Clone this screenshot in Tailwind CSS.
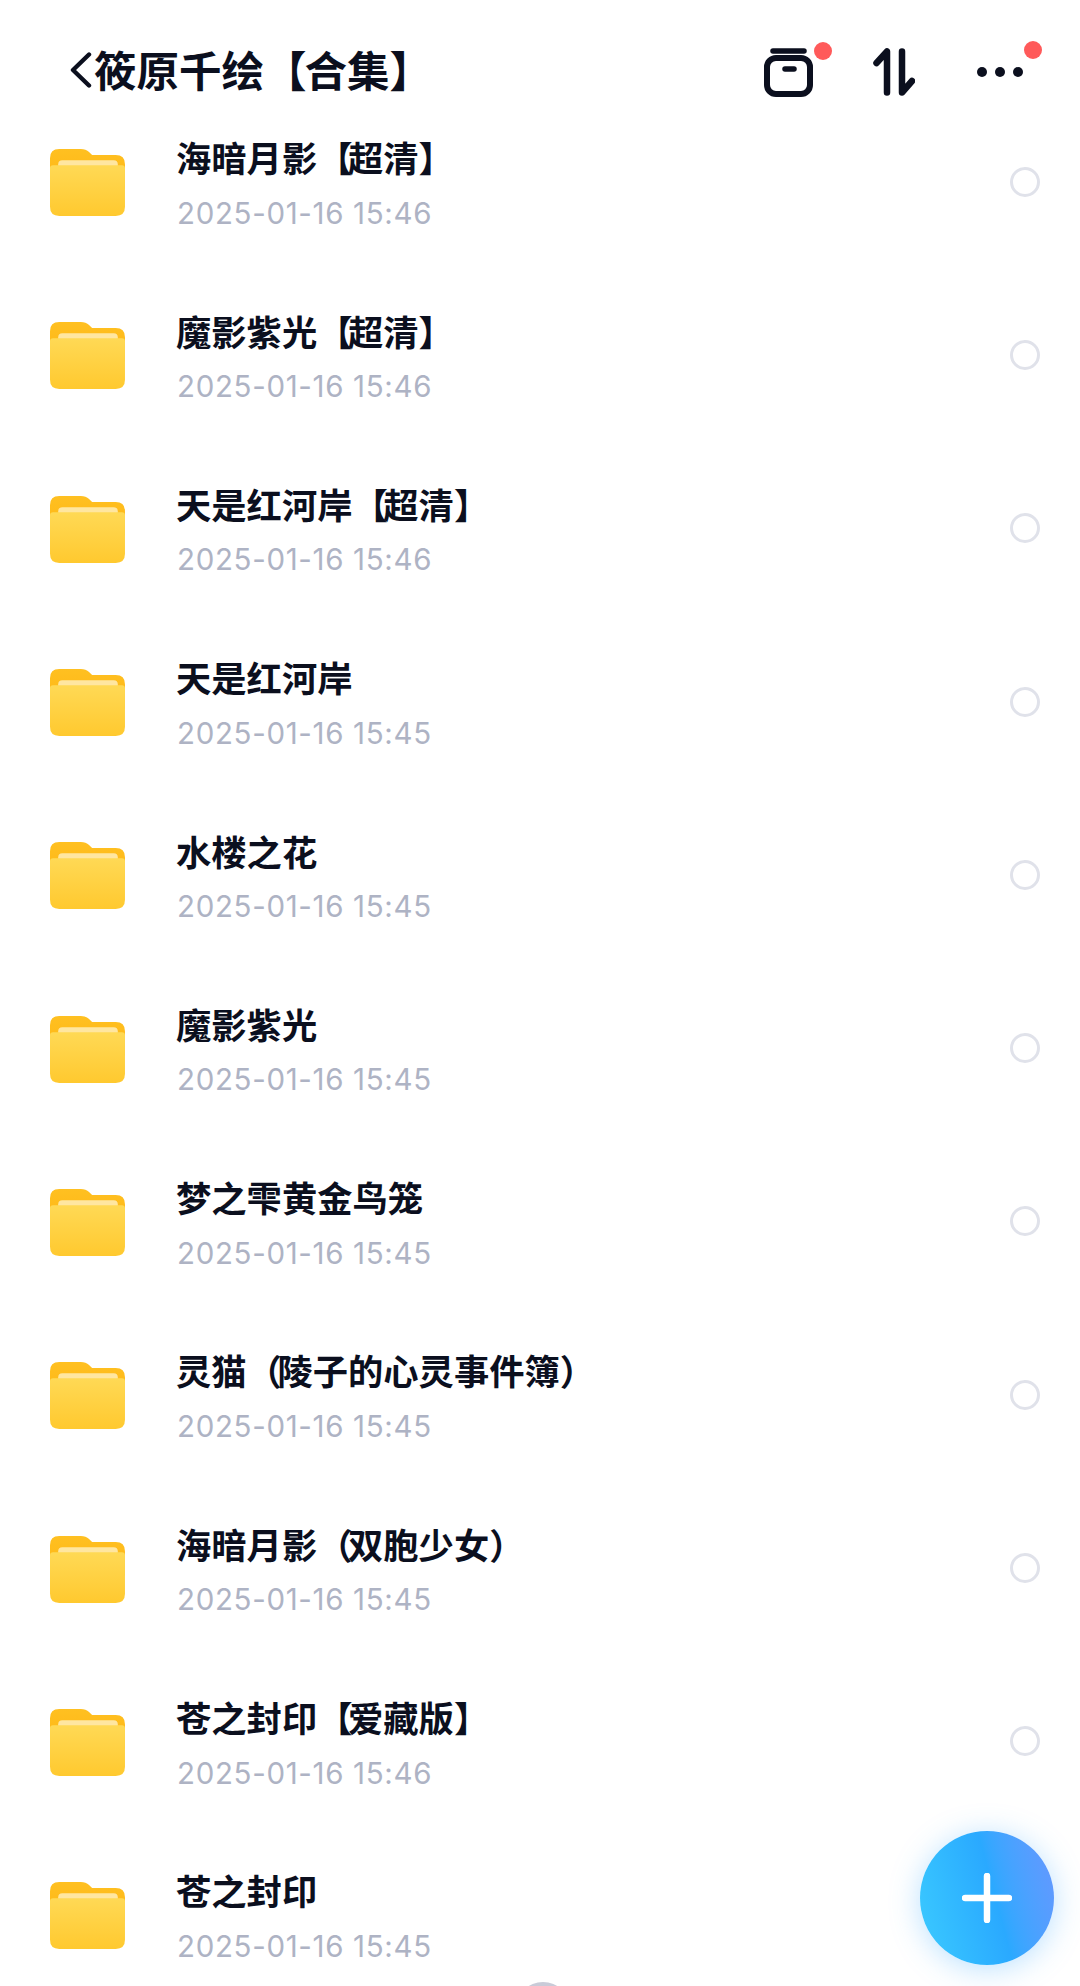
<!DOCTYPE html>
<html lang="zh-CN">
<head>
  <meta charset="UTF-8" />
  <meta name="viewport" content="width=device-width, initial-scale=1.0" />
  <title>筱原千绘【合集】</title>
  <script src="https://cdn.jsdelivr.net/npm/@tailwindcss/browser@4"></script>
</head>
<body class="bg-white">
  <div class="relative w-[1080px] h-[1986px] overflow-hidden bg-white font-['Inter','Noto_Sans_CJK_SC',sans-serif]">

    <!-- header -->
    <header class="flex items-center h-[95px] pt-[49px] pl-[69.5px] text-[#0b0f1e]">
      <svg class="w-[22px] h-[40px] shrink-0" viewBox="0 0 22 40" fill="none" stroke="currentColor" stroke-width="4.4" stroke-linecap="round" stroke-linejoin="round">
        <path d="M19 2.5 L3 18 L19 33.5" />
      </svg>
      <h1 class="ml-[2.5px] text-[42.5px] leading-none font-semibold">筱原千绘<span class="tracking-[-2px]">【</span>合集】</h1>

      <div class="relative ml-auto w-[49px] h-[49px] mr-[60px] shrink-0">
        <svg class="w-[49px] h-[49px]" viewBox="0 0 49 49" fill="none" stroke="currentColor" stroke-linecap="round">
          <path d="M9 3 H40" stroke-width="5.5" />
          <rect x="3" y="10" width="43" height="36" rx="9" stroke-width="6" />
          <path d="M21 21 H30" stroke-width="5.5" />
        </svg>
        <span class="absolute left-[50px] top-[-6px] w-[18px] h-[18px] rounded-full bg-[#ff5a5a]"></span>
      </div>

      <svg class="w-[42px] h-[48px] mr-[62px] shrink-0" viewBox="0 0 42 48" fill="none" stroke="currentColor" stroke-width="6.5" stroke-linecap="round" stroke-linejoin="round">
        <path d="M3.5 15 L14 3.5 V44.5" />
        <path d="M29 3.5 V44.5 L39 33" />
      </svg>

      <div class="relative flex items-center gap-[8.5px] mr-[57px] w-[46px] shrink-0">
        <span class="w-[9.5px] h-[9.5px] rounded-full bg-[#0b0f1e] shrink-0"></span>
        <span class="w-[9.5px] h-[9.5px] rounded-full bg-[#0b0f1e] shrink-0"></span>
        <span class="w-[9.5px] h-[9.5px] rounded-full bg-[#0b0f1e] shrink-0"></span>
        <span class="absolute left-[47px] top-[-26px] w-[18px] h-[18px] rounded-full bg-[#ff5a5a]"></span>
      </div>
    </header>

    <!-- file list -->
    <ul id="list"></ul>

    <!-- floating add button -->
    <button class="absolute left-[920px] top-[1831px] w-[134px] h-[134px] rounded-full flex items-center justify-center bg-linear-75 from-[#3ccbff] via-[#2aa9ff] via-55% to-[#6696ff] shadow-[0_4px_30px_rgba(60,170,255,0.35)]">
      <svg class="w-[50px] h-[50px]" viewBox="0 0 50 50" fill="none" stroke="white" stroke-width="6.5" stroke-linecap="round">
        <path d="M25 3 V47 M3 25 H47" />
      </svg>
    </button>

    <!-- bottom edge of the handle -->
    <div class="absolute left-[516px] top-[1982px] w-[54px] h-[54px] rounded-full bg-[#c9cbd8]"></div>
  </div>

  <script>
    const tight = '<span class="tracking-[-4.5px]">';
    const items = [
      [`海暗月影${tight}【</span>超清】`, '2025-01-16 15:46'],
      [`魔影紫光${tight}【</span>超清】`, '2025-01-16 15:46'],
      [`天是红河岸${tight}【</span>超清】`, '2025-01-16 15:46'],
      ['天是红河岸', '2025-01-16 15:45'],
      ['水楼之花', '2025-01-16 15:45'],
      ['魔影紫光', '2025-01-16 15:45'],
      ['梦之雫黄金鸟笼', '2025-01-16 15:45'],
      [`灵猫${tight}（</span>陵子的心灵事件簿）`, '2025-01-16 15:45'],
      [`海暗月影${tight}（</span>双胞少女）`, '2025-01-16 15:45'],
      [`苍之封印${tight}【</span>爱藏版】`, '2025-01-16 15:46'],
      ['苍之封印', '2025-01-16 15:45'],
    ];

    const listEl = document.getElementById('list');
    items.forEach((item, i) => {
      listEl.innerHTML += `
        <li class="flex items-center h-[173.3px] pl-[50px] pr-[40px]">
          <svg class="w-[76px] h-[69px] mt-[2px] shrink-0" viewBox="0 0 74 68" preserveAspectRatio="none" fill="none">
            <defs>
              <linearGradient id="back${i}" x1="0" y1="0" x2="0" y2="1">
                <stop offset="0" stop-color="#ffc021" />
                <stop offset="1" stop-color="#ffb512" />
              </linearGradient>
              <linearGradient id="front${i}" x1="0" y1="0" x2="0" y2="1">
                <stop offset="0" stop-color="#ffd955" />
                <stop offset="1" stop-color="#ffc92f" />
              </linearGradient>
            </defs>
            <path d="M0 10 Q0 1 9 1 H30 Q35 1 38 4 L41 7 H64 Q73 7 73 16 V40 H0 Z" fill="url(#back${i})" />
            <rect x="8" y="12" width="58" height="12" rx="4" fill="#ffe6a0" />
            <path d="M0 20 Q0 17 3 17 H70 Q73 17 73 20 V58 Q73 67 64 67 H9 Q0 67 0 58 Z" fill="url(#front${i})" />
          </svg>
          <div class="ml-[51px] flex-1 pt-[6px]">
            <div class="ml-[-1px] text-[35.3px] leading-[44px] font-semibold text-[#0b0f1e]">${item[0]}</div>
            <div class="mt-[12.5px] text-[29.5px] leading-[36px] tracking-[0.66px] text-[#aeb3c4]">${item[1]}</div>
          </div>
          <span class="w-[30px] h-[30px] rounded-full border-[3px] border-[#e0e2ea] shrink-0"></span>
        </li>`;
    });
  </script>
</body>
</html>
